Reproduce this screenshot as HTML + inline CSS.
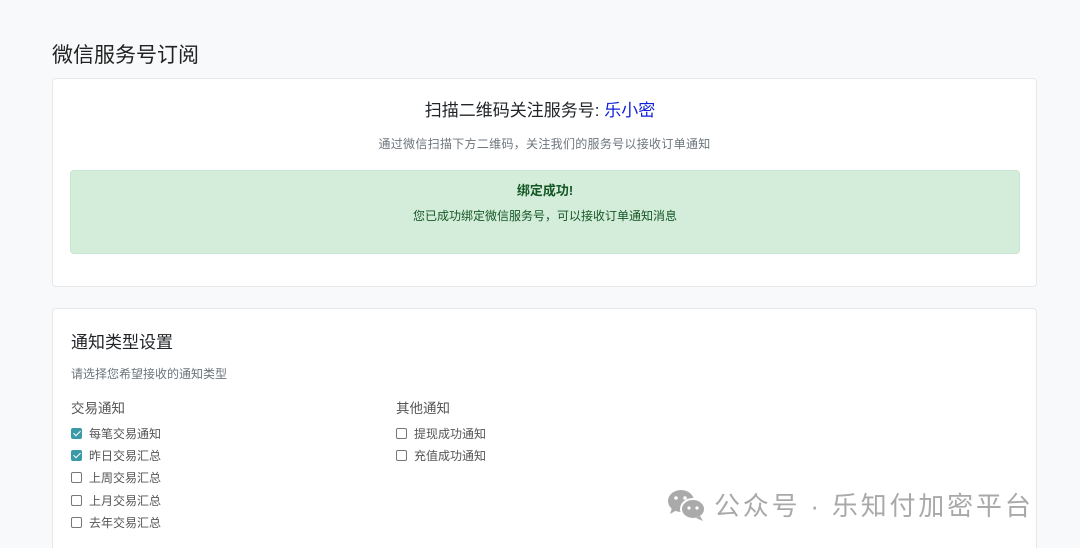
<!DOCTYPE html>
<html style="overflow:hidden;height:548px"><head><meta charset="utf-8"><style>
*{box-sizing:border-box;margin:0;padding:0}
body{width:1080px;height:548px;overflow:hidden;background:#f8f9fa;font-family:"Liberation Sans","Noto Sans CJK SC",sans-serif;color:#212529;position:relative}
h1{position:absolute;left:52px;top:39px;font-size:21px;font-weight:400;color:#222}
.card{position:absolute;left:52px;width:985px;background:#fff;border:1px solid #e6e8ea;border-radius:4px}
.c1{top:78px;height:209px}
.c2{top:308px;height:240px;border-bottom:none;border-radius:4px 4px 0 0}
.t1{position:absolute;left:0;width:100%;text-align:center;font-size:17px}
.t1 span{color:#0d1fd8}
.s1{position:absolute;top:56px;width:100%;text-align:center;font-size:12px;color:#6c757d;letter-spacing:0.3px}
.ok{position:absolute;left:17px;top:91px;width:950px;height:84px;background:#d4edda;border:1px solid #c8e6cf;border-radius:4px;color:#155724;text-align:center}
.ok b{display:block;margin-top:9px;font-size:13px}
.ok p{font-size:12px;margin-top:8px}
.h2{position:absolute;left:18px;top:19px;font-size:17px}
.sub{position:absolute;left:18px;top:56px;font-size:12px;color:#6c757d}
.col{position:absolute;top:88px}
.col h3{font-size:13.5px;font-weight:400;color:#555;margin-bottom:5px}
.it{height:22.3px;font-size:12px;color:#555;display:flex;align-items:center}
.cb{width:11px;height:11px;border:1px solid #777;border-radius:2px;margin-right:7px;background:#fff}
.cb.on{background:#3a9aa6;border-color:#3a9aa6;position:relative}
.cb.on:after{content:"";position:absolute;left:3px;top:0px;width:3px;height:6px;border:solid #fff;border-width:0 1.5px 1.5px 0;transform:rotate(45deg)}
.wm{position:absolute;left:666px;top:486px;font-size:26px;color:#a9a9a9;display:flex;align-items:center;letter-spacing:2.8px}
</style></head><body>
<h1>微信服务号订阅</h1>
<div class="card c1">
<div class="s1">通过微信扫描下方二维码，关注我们的服务号以接收订单通知</div>
<div class="ok"><b>绑定成功!</b><p>您已成功绑定微信服务号，可以接收订单通知消息</p></div>
</div>
<div class="t1" style="top:96px">扫描二维码关注服务号: <span>乐小密</span></div>
<div class="card c2">
<div class="h2">通知类型设置</div>
<div class="sub">请选择您希望接收的通知类型</div>
<div class="col" style="left:18px"><h3>交易通知</h3>
<div class="it"><span class="cb on"></span>每笔交易通知</div>
<div class="it"><span class="cb on"></span>昨日交易汇总</div>
<div class="it"><span class="cb"></span>上周交易汇总</div>
<div class="it"><span class="cb"></span>上月交易汇总</div>
<div class="it"><span class="cb"></span>去年交易汇总</div>
</div>
<div class="col" style="left:343px"><h3>其他通知</h3>
<div class="it"><span class="cb"></span>提现成功通知</div>
<div class="it"><span class="cb"></span>充值成功通知</div>
</div>
</div>
<div class="wm"><svg width="42" height="34" viewBox="0 0 42 34"><ellipse cx="15" cy="13" rx="13" ry="11" fill="#aaa"/><path d="M6 20l-2 6 7-4z" fill="#aaa"/><ellipse cx="27" cy="21" rx="12" ry="10" fill="#aaa" stroke="#fff" stroke-width="2"/><path d="M34 28l3 5-7-3z" fill="#aaa"/><circle cx="10" cy="10" r="1.8" fill="#fff"/><circle cx="19" cy="10" r="1.8" fill="#fff"/><circle cx="23" cy="20" r="1.6" fill="#fff"/><circle cx="31" cy="20" r="1.6" fill="#fff"/></svg><span style="margin-left:6px">公众号 · 乐知付加密平台</span></div>
</body></html>
